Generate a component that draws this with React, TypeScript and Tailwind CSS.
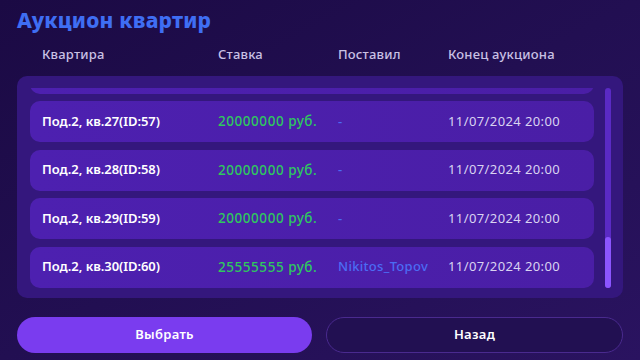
const rows = [
  { flat: "Под.2, кв.26(ID:56)", bid: "20000000 руб.", by: "-", end: "11/07/2024 20:00" },
  { flat: "Под.2, кв.27(ID:57)", bid: "20000000 руб.", by: "-", end: "11/07/2024 20:00" },
  { flat: "Под.2, кв.28(ID:58)", bid: "20000000 руб.", by: "-", end: "11/07/2024 20:00" },
  { flat: "Под.2, кв.29(ID:59)", bid: "20000000 руб.", by: "-", end: "11/07/2024 20:00" },
  { flat: "Под.2, кв.30(ID:60)", bid: "25555555 руб.", by: "Nikitos_Topov", end: "11/07/2024 20:00" },
];

const cols = "grid grid-cols-[176px_120px_110px_1fr] items-center";

export default function App() {
  return (
    <div
      className="w-[640px] h-[360px] overflow-hidden bg-gradient-to-br from-[#1b0a44] via-[#220f52] to-[#2a1360] px-[17px] flex flex-col"
      style={{ fontFamily: '"Noto Sans", "Open Sans", sans-serif' }}
    >
      <h1 className="pt-[5px] h-[40px] text-[21px] leading-[30px] font-extrabold text-[#3f6ef3] tracking-[0.2px]">
        Аукцион квартир
      </h1>

      <div className={`${cols} pl-[25px] h-[28px] text-[13px] leading-[20px] font-medium text-[#c9c1e4] tracking-[0.2px]`}>
        <span>Квартира</span>
        <span>Ставка</span>
        <span>Поставил</span>
        <span>Конец аукциона</span>
      </div>

      <div className="mt-[8px] h-[222px] rounded-[10px] bg-[#34177d] pl-[13px] pr-[12px] pt-[12px] pb-[10px] flex gap-[11px]">
        <div className="flex-1 h-[200px] overflow-hidden">
          <div className="-mt-[35.5px] flex flex-col gap-[7.5px]">
            {rows.map((r, i) => (
              <div
                key={r.flat}
                className={`${cols} h-[41px] shrink-0 rounded-[10px] bg-gradient-to-r from-[#4d20b0] to-[#4a1ea6] pl-[12px] text-[13px]`}
              >
                {i === 0 ? null : (
                  <>
                    <span className="font-semibold text-white tracking-[-0.05px]">{r.flat}</span>
                    <span className="font-medium text-[#2fc85e] text-[13.5px] tracking-[0.55px]">{r.bid}</span>
                    <span className="font-medium text-[#4b6cf4] tracking-[0.3px]">{r.by}</span>
                    <span className="text-[#d9d3f1] tracking-[0.4px]">{r.end}</span>
                  </>
                )}
              </div>
            ))}
          </div>
        </div>
        <div className="w-[6px] h-[200px] rounded-full bg-[#5a2ac4] flex flex-col justify-end">
          <div className="h-[51px] rounded-full bg-[#8b55ff]" />
        </div>
      </div>

      <div className="mt-[19px] flex gap-[14px]">
        <button className="flex-1 h-[36px] rounded-full bg-[#7a3cef] text-white text-[13px] font-semibold tracking-[0.3px]">
          Выбрать
        </button>
        <button className="flex-1 h-[36px] rounded-full border border-[#4a2a8f] bg-[#221052] text-white text-[13px] font-semibold tracking-[0.3px]">
          Назад
        </button>
      </div>
    </div>
  );
}
